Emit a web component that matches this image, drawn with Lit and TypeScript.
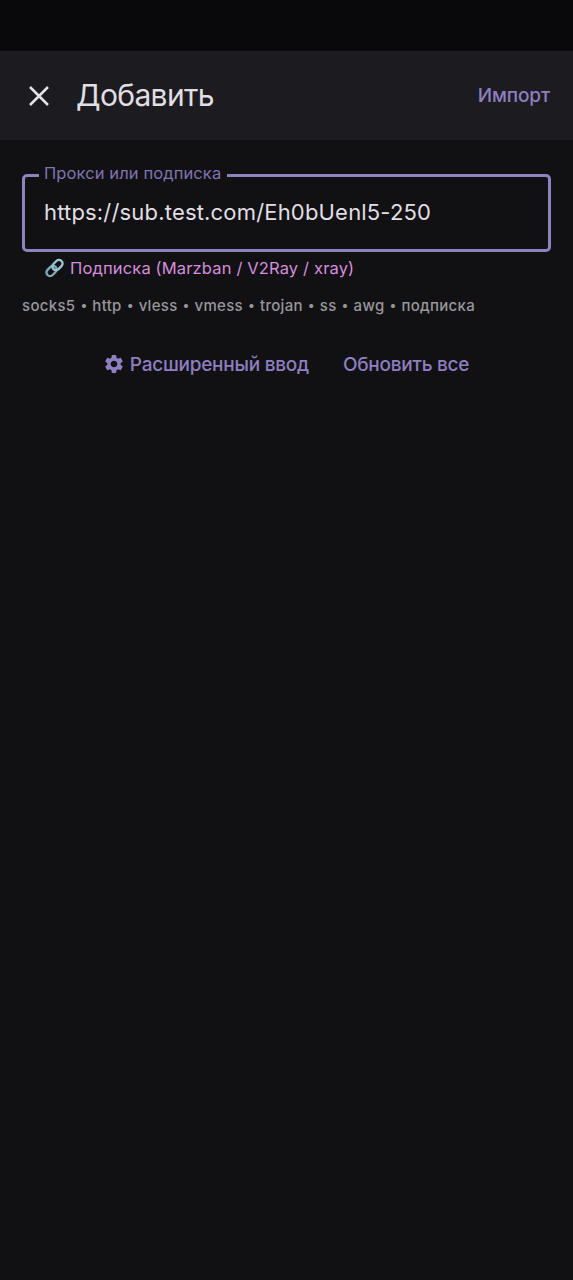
import { LitElement, html, css } from "lit";
import { customElement } from "lit/decorators.js";

const PROTOCOLS = ["socks5", "http", "vless", "vmess", "trojan", "ss", "awg", "подписка"];

@customElement("app-root")
export class AppRoot extends LitElement {
  static styles = css`
    :host {
      display: flex;
      flex-direction: column;
      height: 1280px;
      background: #111113;
      color: #e0dfe3;
      font-family: Inter, Roboto, "Liberation Sans", sans-serif;
      white-space: nowrap;
      overflow: hidden;
    }
    svg { display: block; flex: none; }
    .status { height: 51px; background: #09090b; flex: none; }
    header {
      box-sizing: border-box;
      height: 89px;
      flex: none;
      display: flex;
      align-items: center;
      padding: 0 23px 0 28px;
      background: #1c1b1f;
    }
    h1 {
      margin: 0 auto 1px 26px;
      font-size: 30px;
      line-height: 40px;
      font-weight: 400;
      letter-spacing: -0.65px;
    }
    button {
      display: flex;
      align-items: center;
      padding: 0;
      border: 0;
      background: none;
      color: #8d7fc0;
      font: 500 19px/28px Inter, Roboto, sans-serif;
      letter-spacing: -0.25px;
    }
    .close { color: #e3e2e6; }
    .import { letter-spacing: -0.1px; padding-top: 1px; }
    main { display: flex; flex-direction: column; padding: 21px 22px 0; }
    fieldset {
      box-sizing: border-box;
      height: 91px;
      margin: 0;
      padding: 0 19px;
      border: 3px solid #8f83bf;
      border-radius: 5px;
      min-width: 0;
    }
    legend {
      margin-left: -5px;
      padding: 0 6px 5px 5px;
      color: #8073b0;
      font-size: 16.5px;
      line-height: 24px;
      letter-spacing: 0.1px;
    }
    .value { font-size: 22px; line-height: 30px; padding-top: 7px; letter-spacing: 0.18px; }
    .kind {
      display: flex;
      align-items: center;
      gap: 6px;
      height: 24px;
      margin: 4px 0 0 23px;
      color: #d68ddd;
      font-size: 16.5px;
      letter-spacing: 0.15px;
    }
    .protocols {
      display: flex;
      margin-top: 15px;
      color: #98979c;
      font-size: 15px;
      font-weight: 500;
      line-height: 22px;
      letter-spacing: 0.3px;
    }
    .dot { width: 17px; text-align: center; font-size: 13px; line-height: 21px; letter-spacing: 0; }
    .actions { display: flex; justify-content: center; gap: 34px; margin-top: 33px; }
    .actions span { padding-top: 1px; }
    .advanced { gap: 7px; }
    .gear { margin: 0 0 1px 1px; }
  `;

  render() {
    return html`
      <div class="status"></div>
      <header>
        <button class="close" aria-label="Закрыть">
          <svg width="22" height="22" viewBox="0 0 22 22" fill="none" stroke="currentColor" stroke-width="2.5">
            <path d="M2 2 20 20M20 2 2 20" />
          </svg>
        </button>
        <h1>Добавить</h1>
        <button class="import">Импорт</button>
      </header>
      <main>
        <fieldset>
          <legend>Прокси или подписка</legend>
          <div class="value">https://sub.test.com/Eh0bUenl5-250</div>
        </fieldset>
        <div class="kind">
          <svg width="19" height="20" viewBox="0 0 20 20" fill="none">
            <g transform="rotate(-45 10 10)" stroke-width="2.5">
              <rect x="-.4" y="6.2" width="12" height="7.6" rx="3.8" stroke="#7fa9b7" />
              <rect x="8.4" y="6.2" width="12" height="7.6" rx="3.8" stroke="#9cc5d2" />
            </g>
          </svg>
          <span>Подписка (Marzban / V2Ray / xray)</span>
        </div>
        <div class="protocols">
          ${PROTOCOLS.map((name, i) => html`${i ? html`<span class="dot">•</span>` : ""}<span>${name}</span>`)}
        </div>
        <div class="actions">
          <button class="advanced">
            <svg class="gear" width="18" height="18" viewBox="2.3 2.3 19.4 19.4" fill="currentColor">
              <path d="M19.14 12.94c.04-.3.06-.61.06-.94 0-.32-.02-.64-.07-.94l2.03-1.58c.18-.14.23-.41.12-.61l-1.92-3.32c-.12-.22-.37-.29-.59-.22l-2.39.96c-.5-.38-1.03-.7-1.62-.94l-.36-2.54c-.04-.24-.24-.41-.48-.41h-3.84c-.24 0-.43.17-.47.41l-.36 2.54c-.59.24-1.13.57-1.62.94l-2.39-.96c-.22-.08-.47 0-.59.22L2.74 8.87c-.12.21-.08.47.12.61l2.03 1.58c-.05.3-.09.63-.09.94s.02.64.07.94l-2.03 1.58c-.18.14-.23.41-.12.61l1.92 3.32c.12.22.37.29.59.22l2.39-.96c.5.38 1.03.7 1.62.94l.36 2.54c.05.24.24.41.48.41h3.84c.24 0 .44-.17.47-.41l.36-2.54c.59-.24 1.13-.56 1.62-.94l2.39.96c.22.08.47 0 .59-.22l1.92-3.32c.12-.22.07-.47-.12-.61l-2.01-1.58zM12 15.6c-1.98 0-3.6-1.62-3.6-3.6s1.62-3.6 3.6-3.6 3.6 1.62 3.6 3.6-1.62 3.6-3.6 3.6z" />
            </svg>
            <span>Расширенный ввод</span>
          </button>
          <button><span>Обновить все</span></button>
        </div>
      </main>
    `;
  }
}
